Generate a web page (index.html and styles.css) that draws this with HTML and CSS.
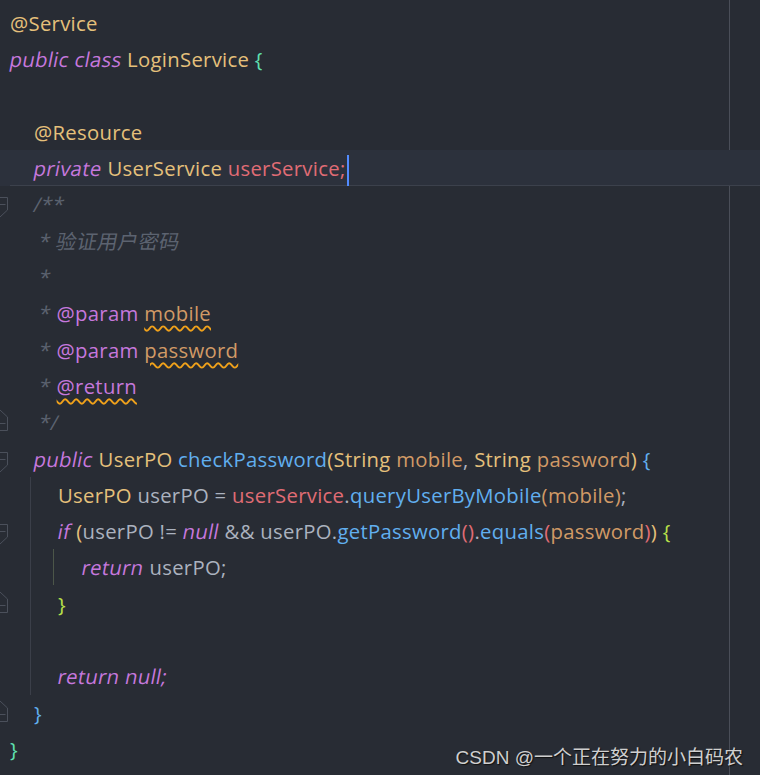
FILE: index.html
```html
<!DOCTYPE html>
<html>
<head>
<meta charset="utf-8">
<link rel="stylesheet" href="styles.css">
</head>
<body>
<div class="editor">
  <div class="line"><span class="gut"></span><span class="code"><span class="ty">@Service</span></span></div>
  <div class="line"><span class="gut"></span><span class="code"><span class="kw">public</span> <span class="kw">class</span> <span class="ty">LoginService</span> <span class="br-g">{</span></span></div>
  <div class="line"><span class="gut"></span><span class="code"></span></div>
  <div class="line"><span class="gut"></span><span class="ind"></span><span class="code"><span class="ty">@Resource</span></span></div>
  <div class="line cur"><span class="gut"></span><span class="ind"></span><span class="code"><span class="kw">private</span> <span class="ty">UserService</span> <span class="fd">userService;</span><span class="caret"></span></span></div>
  <div class="line"><span class="gut"><svg width="10" height="36" viewBox="0 0 10 36"><path d="M0 11.5H7.5V24L0 31M0 18.5H5.5" fill="none" stroke="#4b505b" stroke-width="1"/></svg></span><span class="ind"></span><span class="code"><span class="cm">/**</span></span></div>
  <div class="line"><span class="gut"></span><span class="ind"></span><span class="code"><span class="cm"> * 验证用户密码</span></span></div>
  <div class="line"><span class="gut"></span><span class="ind"></span><span class="code"><span class="cm"> *</span></span></div>
  <div class="line"><span class="gut"></span><span class="ind"></span><span class="code"><span class="cm"> * </span><span class="tag">@param</span> <span class="pm wavy">mobile</span></span></div>
  <div class="line"><span class="gut"></span><span class="ind"></span><span class="code"><span class="cm"> * </span><span class="tag">@param</span> <span class="pm wavy">password</span></span></div>
  <div class="line"><span class="gut"></span><span class="ind"></span><span class="code"><span class="cm"> * </span><span class="tag wavy">@return</span></span></div>
  <div class="line"><span class="gut"><svg width="10" height="36" viewBox="0 0 10 36"><path d="M0 6L7.5 13V26.5H0M0 19.5H5.5" fill="none" stroke="#4b505b" stroke-width="1"/></svg></span><span class="ind"></span><span class="code"><span class="cm"> */</span></span></div>
  <div class="line"><span class="gut"><svg width="10" height="36" viewBox="0 0 10 36"><path d="M0 11.5H7.5V24L0 31M0 18.5H5.5" fill="none" stroke="#4b505b" stroke-width="1"/></svg></span><span class="ind"></span><span class="code"><span class="kw">public</span> <span class="ty">UserPO</span> <span class="fn">checkPassword</span><span class="br-y">(</span><span class="ty">String</span> <span class="pm">mobile</span>, <span class="ty">String</span> <span class="pm">password</span><span class="br-y">)</span> <span class="br-b">{</span></span></div>
  <div class="line"><span class="gut"></span><span class="ind guide"></span><span class="ind"></span><span class="code"><span class="ty">UserPO</span> userPO = <span class="fd">userService</span>.<span class="fn">queryUserByMobile</span><span class="pm">(mobile)</span>;</span></div>
  <div class="line"><span class="gut"><svg width="10" height="36" viewBox="0 0 10 36"><path d="M0 11.5H7.5V24L0 31M0 18.5H5.5" fill="none" stroke="#4b505b" stroke-width="1"/></svg></span><span class="ind guide"></span><span class="ind"></span><span class="code"><span class="kw">if</span> <span class="br-y">(</span>userPO != <span class="kw">null</span> &amp;&amp; userPO.<span class="fn">getPassword</span><span class="br-p">()</span>.<span class="fn">equals</span><span class="br-p">(</span><span class="pm">password</span><span class="br-p">)</span><span class="br-y">)</span> <span class="br-l">{</span></span></div>
  <div class="line"><span class="gut"></span><span class="ind guide"></span><span class="ind guide-g"></span><span class="ind"></span><span class="code"><span class="kw">return</span> userPO;</span></div>
  <div class="line"><span class="gut"><svg width="10" height="36" viewBox="0 0 10 36"><path d="M0 6L7.5 13V26.5H0M0 19.5H5.5" fill="none" stroke="#4b505b" stroke-width="1"/></svg></span><span class="ind guide"></span><span class="ind"></span><span class="code"><span class="br-l">}</span></span></div>
  <div class="line"><span class="gut"></span><span class="ind guide"></span><span class="ind"></span><span class="code"></span></div>
  <div class="line"><span class="gut"></span><span class="ind guide"></span><span class="ind"></span><span class="code"><span class="kw">return null;</span></span></div>
  <div class="line"><span class="gut"><svg width="10" height="36" viewBox="0 0 10 36"><path d="M0 6L7.5 13V26.5H0M0 19.5H5.5" fill="none" stroke="#4b505b" stroke-width="1"/></svg></span><span class="ind"></span><span class="code"><span class="br-b">}</span></span></div>
  <div class="line"><span class="gut"></span><span class="code"><span class="br-g">}</span></span></div>
  <div class="wm">CSDN @一个正在努力的小白码农</div>
</div>
</body>
</html>
```

FILE: styles.css
```css
html, body {
  margin: 0;
  padding: 0;
  background: #282c34;
}

.editor {
  position: relative;
  width: 760px;
  height: 775px;
  overflow: hidden;
  box-sizing: border-box;
  padding-top: 5px;
  background-color: #282c34;
  background-image: linear-gradient(to right, transparent 729px, #4a4e58 729px, #4a4e58 730px, transparent 730px);
  font-family: "Open Sans", "Noto Sans CJK SC", sans-serif;
  font-size: 20.3px;
  letter-spacing: 0.3px;
  color: #abb2bf;
}

.line {
  display: flex;
  height: 36.3px;
  line-height: 36.3px;
  white-space: pre;
}

.line.cur {
  background: #2c313c;
}

.line.cur .ind,
.line.cur .code {
  box-shadow: inset 0 -1px #3c414c;
}

.gut {
  flex: none;
  width: 10px;
  height: 36.3px;
}

.gut svg {
  display: block;
}

.ind {
  flex: none;
  width: 24px;
}

.ind.guide {
  background: linear-gradient(to right, transparent 20px, #3b3f49 20px, #3b3f49 21px, transparent 21px);
}

.ind.guide-g {
  background: linear-gradient(to right, transparent 19px, #4c5649 19px, #4c5649 20px, transparent 20px);
  background-size: 100% 36px;
  background-repeat: no-repeat;
}

.code {
  flex: 1;
}

.kw {
  display: inline-block;
  color: #c678dd;
  transform: skewX(-11deg);
}

.ty { color: #e5c07b; }
.fd { color: #e06c75; }
.fn { color: #61afef; }
.pm { color: #d19a66; }
.tag { color: #c678dd; }

.cm {
  display: inline-block;
  color: #5c6370;
  transform: skewX(-11deg);
}

.br-g { color: #5fe0b0; }
.br-y { color: #e5c07b; }
.br-b { color: #61afef; }
.br-p { color: #e06c75; }
.br-l { color: #b8e04a; }

.wavy {
  text-decoration: underline wavy #f0a11a;
  text-decoration-thickness: 1.5px;
  text-underline-offset: 4px;
}

.caret {
  display: inline-block;
  width: 2px;
  height: 31px;
  margin-left: 1px;
  vertical-align: middle;
  background: #528bff;
}

.wm {
  position: absolute;
  right: 17px;
  bottom: 7px;
  font-family: "Liberation Sans", "Noto Sans CJK SC", sans-serif;
  font-size: 19px;
  line-height: 20px;
  letter-spacing: 0;
  color: #cfcfcf;
  text-shadow: 1px 1px 1px #111;
}
```
